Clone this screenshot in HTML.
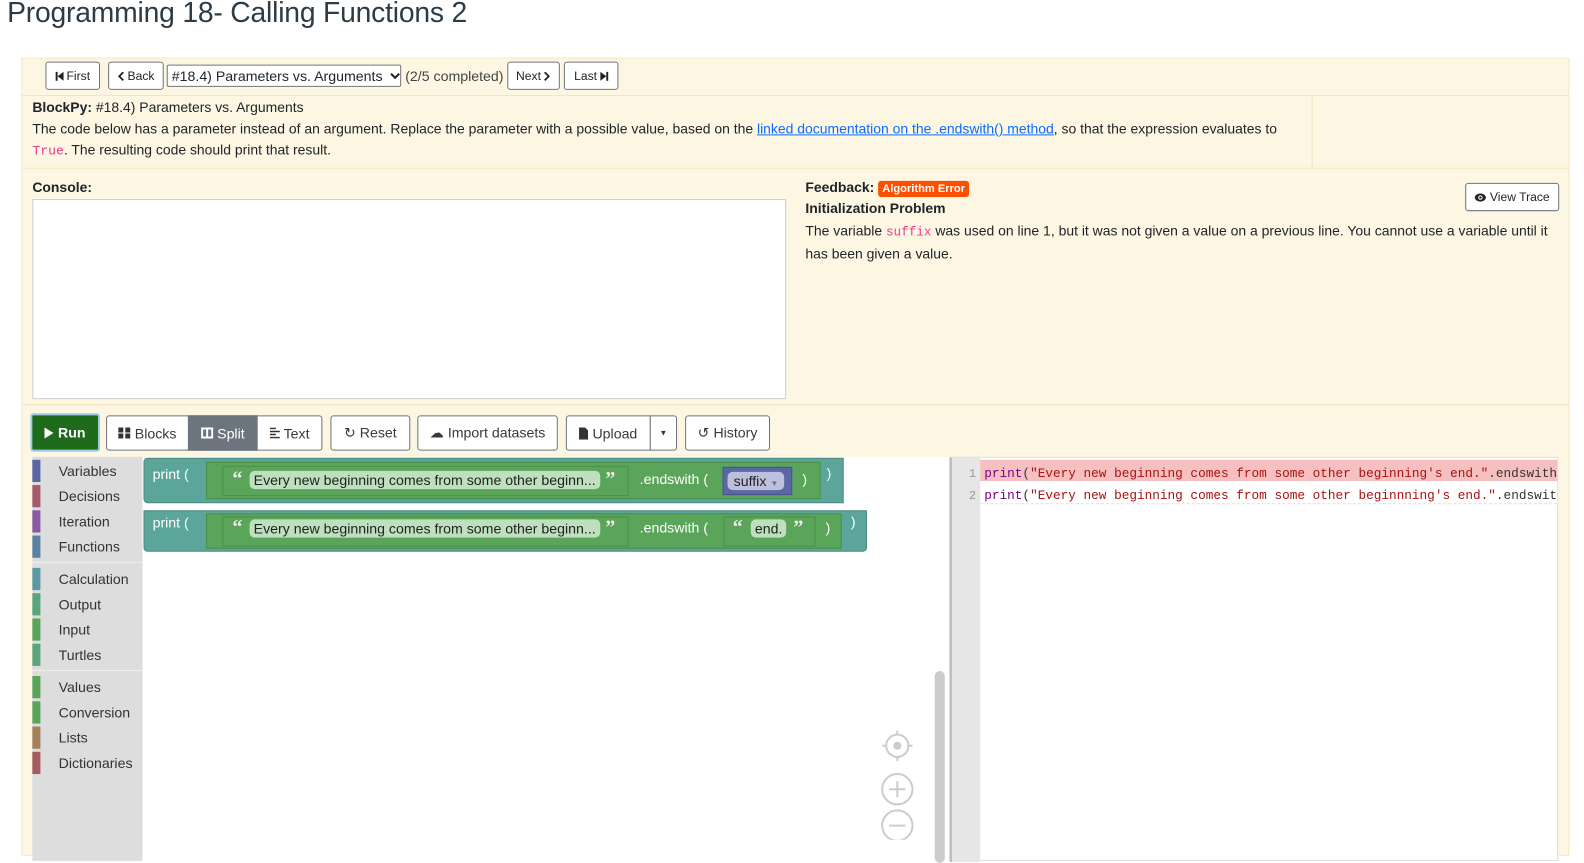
<!DOCTYPE html>
<html><head><meta charset="utf-8">
<style>
*{box-sizing:border-box;margin:0;padding:0}
body{width:1584px;height:831px;overflow:hidden;background:#fff;font-family:"Liberation Sans",sans-serif;font-size:13.8px;color:#212529;position:relative}
#w{position:absolute;left:0;top:0;width:1568px;height:823px;transform:scale(1.0105);transform-origin:0 0}
.a{position:absolute}
h1{position:absolute;left:7px;top:-3px;font-weight:normal;font-size:28px;color:#2d3b45;letter-spacing:-0.2px}
.panel{position:absolute;left:21px;top:57px;width:1532px;height:790px;background:#fcf6e2;border:1px solid #f5e9c8}
.btn{position:absolute;background:#fff;border:1px solid #6c757d;border-radius:3px;font-size:12px;color:#212529;display:flex;align-items:center;justify-content:center;gap:3px}
.tb{position:absolute;top:411px;height:35px;background:#fff;border:1px solid #6c757d;border-radius:3px;font-size:14px;color:#343a40;display:flex;align-items:center;justify-content:center;gap:4px}
code,.mono{font-family:"Liberation Mono",monospace}
.cat{position:absolute;left:32px;width:109px;height:22px;font-size:14px;color:#333}
.cat i{position:absolute;left:0;top:0;width:8px;height:22px}
.cat span{position:absolute;left:26px;top:3px}
.bk{position:absolute;color:#fff;font-size:14px}
.q{position:absolute;color:#eee;font-size:20px;font-weight:bold;font-family:"Liberation Serif",serif}
.str{position:absolute;background:#5ba55b;border:1px solid #4a8f4a}
.pill{position:absolute;background:#bfe0bf;border-radius:5px;color:#222;font-size:14px;padding:1px 4px;white-space:nowrap}
</style></head><body><div id="w">
<h1>Programming 18- Calling Functions 2</h1>
<div class="panel"></div>
<div class="btn" style="left:45px;top:61px;width:54px;height:28px"><svg width="8" height="9"><path d="M0 0h2v9H0zM8 0v9L2 4.5z" fill="#222"/></svg> First</div>
<div class="btn" style="left:107px;top:61px;width:55px;height:28px"><svg width="7" height="9"><path d="M6 0.5L2 4.5l4 4" stroke="#222" stroke-width="1.8" fill="none"/></svg> Back</div>
<div class="btn" style="left:165px;top:64px;width:232px;height:22px;border-color:#767676;border-radius:2px;font-size:14px;justify-content:flex-start;padding-left:4px">#18.4) Parameters vs. Arguments <svg style="margin-left:4px" width="10" height="7"><path d="M1 1l4 4 4-4" stroke="#222" stroke-width="2" fill="none"/></svg></div>
<div class="a" style="left:401px;top:67px;font-size:14px;color:#444">(2/5 completed)</div>
<div class="btn" style="left:502px;top:61px;width:52px;height:28px">Next <svg width="7" height="9"><path d="M1 0.5l4 4-4 4" stroke="#222" stroke-width="1.8" fill="none"/></svg></div>
<div class="btn" style="left:558px;top:61px;width:54px;height:28px">Last <svg width="8" height="9"><path d="M0 0v9l6-4.5zM6 0h2v9H6z" fill="#222"/></svg></div>
<div class="a" style="left:21px;top:94px;width:1532px;border-top:1px solid #f3e5c0"></div>
<div class="a" style="left:1298px;top:94px;height:72px;border-left:1px solid #f3e5c0"></div>
<div class="a" style="left:21px;top:166px;width:1532px;border-top:1px solid #f3e5c0"></div>
<div class="a" style="left:32px;top:96px;line-height:21px;width:1255px"><b>BlockPy:</b> #18.4) Parameters vs. Arguments<br>The code below has a parameter instead of an argument. Replace the parameter with a possible value, based on the <a style="color:#0a6cff;text-decoration:underline">linked documentation on the .endswith() method</a>, so that the expression evaluates to<br><code style="color:#e83e8c;font-size:13px">True</code>. The resulting code should print that result.</div>
<div class="a" style="left:32px;top:178px;font-weight:bold">Console:</div>
<div class="a" style="left:32px;top:197px;width:746px;height:198px;background:#fff;border:1px solid #ccc"></div>
<div class="a" style="left:797px;top:178px"><b>Feedback:</b> <span style="background:#fd4f00;color:#fff;font-size:11px;font-weight:bold;padding:2px 4px;border-radius:3px">Algorithm Error</span></div>
<div class="a" style="left:797px;top:199px;font-weight:bold">Initialization Problem</div>
<div class="a" style="left:797px;top:218px;width:748px;line-height:21px">The variable <code style="color:#e83e8c;font-size:12.5px">suffix</code> was used on line 1, but it was not given a value on a previous line. You cannot use a variable until it has been given a value.</div>
<div class="btn" style="left:1450px;top:181px;width:93px;height:28px"><svg width="12" height="9"><ellipse cx="6" cy="4.5" rx="5.5" ry="4" fill="#222"/><circle cx="6" cy="4.5" r="2.2" fill="#fff"/><circle cx="6" cy="4.5" r="1.2" fill="#222"/></svg> View Trace</div>
<div class="a" style="left:21px;top:400px;width:1532px;border-top:1px solid #f3e5c0"></div>
<div class="tb" style="left:30px;top:409px;width:69px;height:38px;background:#1e6b1b;border:2px solid #9ecbe6;color:#fff;font-weight:bold"><svg width="9" height="11"><path d="M0 0l9 5.5L0 11z" fill="#fff"/></svg>Run</div>
<div class="tb" style="left:105px;width:82px;border-radius:3px 0 0 3px"><svg width="12" height="11"><path d="M0 0h5v5H0zM7 0h5v5H7zM0 6h5v5H0zM7 6h5v5H7z" fill="#333"/></svg>Blocks</div>
<div class="tb" style="left:186px;width:69px;background:#6c757d;color:#fff;border-radius:0"><svg width="12" height="11"><rect x="1" y="1" width="10" height="9" fill="none" stroke="#fff" stroke-width="2"/><path d="M6 1v9" stroke="#fff" stroke-width="2"/></svg>Split</div>
<div class="tb" style="left:254px;width:65px;border-radius:0 3px 3px 0"><svg width="10" height="11"><path d="M0 1h6M0 4h10M0 7h6M0 10h10" stroke="#333" stroke-width="1.4"/></svg>Text</div>
<div class="tb" style="left:327px;width:79px">&#x21BB; Reset</div>
<div class="tb" style="left:413px;width:139px">&#x2601; Import datasets</div>
<div class="tb" style="left:560px;width:84px;border-radius:3px 0 0 3px"><svg width="9" height="12"><path d="M0 0h6l3 3v9H0z" fill="#333"/></svg>Upload</div>
<div class="tb" style="left:643px;width:27px;border-radius:0 3px 3px 0;font-size:8px">&#x25BC;</div>
<div class="tb" style="left:678px;width:84px">&#x21BA; History</div>
<div class="a" style="left:32px;top:452px;width:907px;height:400px;background:#fff"></div>
<div class="a" style="left:32px;top:452px;width:109px;height:400px;background:#ddd"></div>
<div class="cat" style="top:455px"><i style="background:#5b67a5"></i><span>Variables</span></div>
<div class="cat" style="top:480px"><i style="background:#a55b6a"></i><span>Decisions</span></div>
<div class="cat" style="top:505px"><i style="background:#8a5ba5"></i><span>Iteration</span></div>
<div class="cat" style="top:530px"><i style="background:#5b80a5"></i><span>Functions</span></div>
<div class="a" style="left:32px;top:556px;width:109px;border-top:1px solid #eee"></div>
<div class="cat" style="top:562px"><i style="background:#5b9aa5"></i><span>Calculation</span></div>
<div class="cat" style="top:587px"><i style="background:#5ba57a"></i><span>Output</span></div>
<div class="cat" style="top:612px"><i style="background:#5ba55b"></i><span>Input</span></div>
<div class="cat" style="top:637px"><i style="background:#5ba57a"></i><span>Turtles</span></div>
<div class="a" style="left:32px;top:663px;width:109px;border-top:1px solid #eee"></div>
<div class="cat" style="top:669px"><i style="background:#5ba55b"></i><span>Values</span></div>
<div class="cat" style="top:694px"><i style="background:#5ba55b"></i><span>Conversion</span></div>
<div class="cat" style="top:719px"><i style="background:#a5815b"></i><span>Lists</span></div>
<div class="cat" style="top:744px"><i style="background:#a55b5b"></i><span>Dictionaries</span></div>
<div class="a" style="left:142px;top:453px;width:693px;height:45px;background:#5ba59a;border:1px solid #4a8a80;border-radius:4px 0 0 4px"></div>
<div class="bk" style="left:151px;top:461px">print (</div>
<div class="str" style="left:204px;top:457px;width:608px;height:37px"></div>
<div class="str" style="left:220px;top:461px;width:402px;height:30px"></div>
<div class="q" style="left:230px;top:463px">&#x201C;</div>
<div class="pill" style="left:247px;top:466px">Every new beginning comes from some other beginn...</div>
<div class="q" style="left:599px;top:463px">&#x201D;</div>
<div class="bk" style="left:633px;top:466px">.endswith (</div>
<div class="a" style="left:715px;top:462px;width:69px;height:28px;background:#5b67a5;border:1px solid #48528a"></div>
<div class="pill" style="left:720px;top:467px;background:#bcc0dc;padding:1px 6px">suffix <span style="font-size:8px;color:#777">&#x25BC;</span></div>
<div class="bk" style="left:794px;top:466px">)</div>
<div class="bk" style="left:818px;top:460px">)</div>
<div class="a" style="left:142px;top:505px;width:716px;height:41px;background:#5ba59a;border:1px solid #4a8a80;border-radius:0 0 4px 4px"></div>
<div class="bk" style="left:151px;top:509px">print (</div>
<div class="str" style="left:204px;top:508px;width:629px;height:35px"></div>
<div class="str" style="left:220px;top:511px;width:402px;height:30px"></div>
<div class="q" style="left:230px;top:511px">&#x201C;</div>
<div class="pill" style="left:247px;top:514px">Every new beginning comes from some other beginn...</div>
<div class="q" style="left:599px;top:511px">&#x201D;</div>
<div class="bk" style="left:633px;top:514px">.endswith (</div>
<div class="str" style="left:716px;top:511px;width:91px;height:30px"></div>
<div class="q" style="left:725px;top:511px">&#x201C;</div>
<div class="pill" style="left:743px;top:514px">end.</div>
<div class="q" style="left:785px;top:511px">&#x201D;</div>
<div class="bk" style="left:817px;top:514px">)</div>
<div class="bk" style="left:842px;top:508px">)</div>
<div class="a" style="left:925px;top:664px;width:10px;height:190px;background:#ccc;border-radius:5px"></div>
<svg class="a" style="left:870px;top:720px" width="36" height="111" viewBox="0 0 36 111">
<g fill="none" stroke="#ccc" stroke-width="2"><circle cx="18" cy="18" r="11"/><path d="M18 3v4M18 29v4M3 18h4M29 18h4"/><circle cx="18" cy="61" r="15"/><path d="M10 61h16M18 53v16"/><circle cx="18" cy="97" r="15"/><path d="M10 97h16"/></g><circle cx="18" cy="18" r="4" fill="#ccc"/></svg>
<div class="a" style="left:939px;top:452px;width:603px;height:400px;background:#fff;border:1px solid #ddd"></div>
<div class="a" style="left:940px;top:453px;width:30px;height:400px;background:#e6e6e6;border-left:2px solid #bbb"></div>
<div class="a" style="left:970px;top:455px;width:571px;height:21px;background:#f7c0c0"></div>
<div class="a" style="left:970px;top:498px;width:571px;border-top:1px dashed #ddd"></div>
<div class="a mono" style="left:940px;top:458px;width:26px;text-align:right;font-size:12px;color:#999;line-height:22px">1<br>2</div>
<div class="a mono" style="left:974px;top:458px;width:567px;overflow:hidden;white-space:nowrap;font-size:12.6px;line-height:22px;color:#a11"><span style="color:#708">print</span><span style="color:#333">(</span>"Every new beginning comes from some other beginning's end."<span style="color:#333">.endswith(</span><br><span style="color:#708">print</span><span style="color:#333">(</span>"Every new beginning comes from some other beginnning's end."<span style="color:#333">.endswith(</span></div>
</div></body></html>
